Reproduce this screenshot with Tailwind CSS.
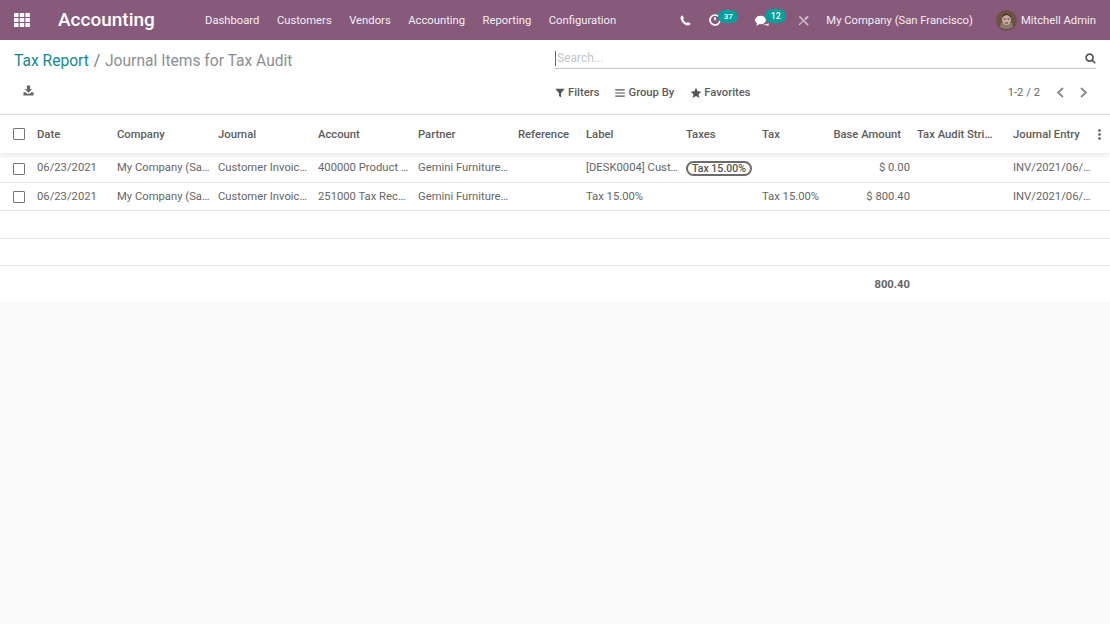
<!DOCTYPE html>
<html lang="en">
<head>
  <meta charset="UTF-8">
  <title>Journal Items for Tax Audit | Accounting</title>
  <script src="https://cdn.jsdelivr.net/npm/@tailwindcss/browser@4"></script>
</head>
<body class="bg-[#f9f9f9] h-[624px] overflow-hidden font-['Roboto',sans-serif] text-[11.25px] text-[#666]">
  <!-- Navigation -->
  <nav class="h-10 bg-[#875a7b] text-white flex items-center">
    <svg class="ml-[14px] w-4 h-4" viewBox="0 0 16 16" fill="#fff">
      <rect x="0" y="1" width="4.5" height="4" rx=".6"/><rect x="5.7" y="1" width="4.5" height="4" rx=".6"/><rect x="11.4" y="1" width="4.5" height="4" rx=".6"/>
      <rect x="0" y="6" width="4.5" height="4" rx=".6"/><rect x="5.7" y="6" width="4.5" height="4" rx=".6"/><rect x="11.4" y="6" width="4.5" height="4" rx=".6"/>
      <rect x="0" y="11" width="4.5" height="4" rx=".6"/><rect x="5.7" y="11" width="4.5" height="4" rx=".6"/><rect x="11.4" y="11" width="4.5" height="4" rx=".6"/>
    </svg>
    <span class="ml-[28px] w-[147px] pt-px text-[19px] font-medium">Accounting</span>
    <div class="flex gap-[17.5px] pt-[2px] text-[#f3eef2]">
      <a>Dashboard</a>
      <a>Customers</a>
      <a>Vendors</a>
      <a>Accounting</a>
      <a>Reporting</a>
      <a>Configuration</a>
    </div>
    <div class="ml-auto flex items-center">
      <svg class="w-[11px] h-[11px]" viewBox="0 0 12 12" fill="#fff"><path d="M2.6.6 4.4 3.2 3.3 4.6C3.8 6 5.5 8 7.300 8.800L8.700 7.500 11.400 9.300C11.100 10.600 10.200 11.500 9.100 11.500 5 11.300.7 6.700.6 2.900.6 1.800 1.400.9 2.600.6Z"/></svg>
      <div class="relative ml-[18px] w-[46px] h-5">
        <svg class="absolute left-0 top-[4px] w-3 h-3" viewBox="0 0 12 12" fill="none" stroke="#fff" stroke-width="1.700"><path d="M9.800 2.700A5 5 0 1 0 11 6.500M6 3.200V6.300"/></svg>
        <span class="absolute left-[9px] top-0 w-5 h-[13px] rounded-full bg-[#00a09d] text-[8px] font-medium leading-[13px] text-center">37</span>
      </div>
      <div class="relative w-[43px] h-5">
        <svg class="absolute left-0 top-[5px] w-[14px] h-3" viewBox="0 0 14 12" fill="#fff"><ellipse cx="5.500" cy="5" rx="5.500" ry="4.300"/><path d="M2 8 1.500 11 5 8.500ZM10.500 9.300C12 9.300 13 8.700 13.500 7.700V11L11.500 10.300 8 10Z"/></svg>
        <span class="absolute left-[10px] -top-[1px] w-[21px] h-[14px] rounded-full bg-[#00a09d] text-[9px] font-medium leading-[14px] text-center">12</span>
      </div>
      <svg class="w-[11px] h-[11px]" viewBox="0 0 12 12" fill="none" stroke="#c9b6c4"><path d="M1 11 7 5.300" stroke-width="1.400"/><path d="M7.500 4.800 11 1.500" stroke-width="2.400"/><path d="M1.500 1.500 11 11" stroke-width="1.800"/></svg>
      <span class="ml-[17px] pt-[2px] text-[#f3eef2]">My Company (San Francisco)</span>
      <svg class="ml-[23px] w-[21px] h-[21px]" viewBox="0 0 21 21">
        <circle cx="10.500" cy="10.500" r="10.500" fill="#6b5245"/>
        <path d="M4 17 Q10 21 17 17 L16 13 H5Z" fill="#8a7a72"/>
        <ellipse cx="10.500" cy="9.500" rx="4.500" ry="5.500" fill="#c8ad9c"/>
        <path d="M6 8Q10.500 2 15 8L14 5 10 3.500 7 5Z" fill="#3f2f28"/>
        <path d="M7.500 9h2.200M11.500 9h2.200M9 13h3" stroke="#4b3a33" stroke-width="1"/>
      </svg>
      <span class="ml-[4px] mr-[14px] pt-[2px] text-[#f3eef2]">Mitchell Admin</span>
    </div>
  </nav>

  <!-- Control panel -->
  <div class="h-[75px] bg-white border-b border-[#dee2e6] flex">
    <div class="w-[555px] pl-[14px]">
      <div class="mt-[10px] text-[15.600px] leading-[22px]">
        <a class="text-[#148a8e]">Tax Report</a>
        <span class="text-[#777] ml-px">/</span>
        <span class="text-[#8b8f93] ml-px">Journal Items for Tax Audit</span>
      </div>
      <svg class="ml-[9px] mt-[13px] w-[11px] h-[11px]" viewBox="0 0 12 12" fill="#666"><path d="M4.200.5H7.800V4.500H10L6 8.500 2 4.500H4.200ZM.5 8H3L4.500 9.500H7.500L9 8H11.500V11.500H.5Z"/></svg>
    </div>
    <div class="flex-1 pr-[14px]">
      <div class="mt-[9px] h-5 border-b border-[#c7c7c7] flex items-center justify-between">
        <span class="border-l border-[#666] pl-px leading-[15px] text-[12px] text-[#c4c7ca]">Search...</span>
        <svg class="w-[11px] h-[11px]" viewBox="0 0 12 12" fill="none" stroke="#555" stroke-width="1.800"><circle cx="5" cy="5" r="3.800"/><path d="M8 8 11.200 11.200"/></svg>
      </div>
      <div class="mt-[16px] flex items-center text-[#5c5c5c] font-medium">
        <svg class="w-[10px] h-[10px] mr-[3px]" viewBox="0 0 10 10" fill="#555"><path d="M.2.8H9.800L6.100 5V9.500L3.900 8V5Z"/></svg>
        <span>Filters</span>
        <svg class="ml-[16px] mr-[3px] w-[10px] h-[10px]" viewBox="0 0 11 10" fill="#555"><path d="M.3 1H10.700V2.200H.3ZM.3 4.400H10.700V5.600H.3ZM.3 7.800H10.700V9H.3Z"/></svg>
        <span>Group By</span>
        <svg class="ml-[16px] mr-[2px] w-3 h-3" viewBox="0 0 12 12" fill="#555"><path d="M6 .8 7.600 4.300 11.400 4.700 8.500 7.200 9.400 11 6 9 2.600 11 3.500 7.200.6 4.700 4.400 4.300Z"/></svg>
        <span>Favorites</span>
        <span class="ml-auto font-normal text-[#666]">1-2 / 2</span>
        <svg class="ml-[16px] -translate-y-px w-[9px] h-[11px]" viewBox="0 0 9 11" fill="none" stroke="#888" stroke-width="1.800"><path d="M7 1 2 5.500 7 10"/></svg>
        <svg class="ml-[14px] mr-[8px] -translate-y-px w-[9px] h-[11px]" viewBox="0 0 9 11" fill="none" stroke="#888" stroke-width="1.800"><path d="M2 1 7 5.500 2 10"/></svg>
      </div>
    </div>
  </div>

  <!-- List -->
  <table class="w-full table-fixed bg-white border-collapse">
    <colgroup>
      <col class="w-[37px]"><col class="w-[80px]"><col class="w-[101px]"><col class="w-[100px]"><col class="w-[100px]"><col class="w-[100px]"><col class="w-[68px]"><col class="w-[100px]"><col class="w-[76px]"><col class="w-[71px]"><col class="w-[84px]"><col class="w-[96px]"><col class="w-[79px]"><col class="w-[18px]">
    </colgroup>
    <thead>
      <tr class="h-[38px] text-left text-[#5c5c5c] shadow-[0_2px_7px_rgba(0,0,0,0.1)] relative [&>th]:pt-[2px]">
        <th class="pl-[13px] pt-0!"><span class="block w-[12px] h-[12px] border border-[#767676] rounded-[1px]"></span></th>
        <th class="font-medium">Date</th>
        <th class="font-medium">Company</th>
        <th class="font-medium">Journal</th>
        <th class="font-medium">Account</th>
        <th class="font-medium">Partner</th>
        <th class="font-medium">Reference</th>
        <th class="font-medium">Label</th>
        <th class="font-medium">Taxes</th>
        <th class="font-medium">Tax</th>
        <th class="font-medium text-right pr-[16px] whitespace-nowrap">Base Amount</th>
        <th class="font-medium truncate pr-[19px]">Tax Audit String</th>
        <th class="font-medium whitespace-nowrap">Journal Entry</th>
        <th class="pt-0!">
          <svg class="w-[3px] h-[11px] ml-[6px]" viewBox="0 0 3 11" fill="#555"><circle cx="1.500" cy="1.500" r="1.300"/><circle cx="1.500" cy="5.500" r="1.300"/><circle cx="1.500" cy="9.500" r="1.300"/></svg>
        </th>
      </tr>
    </thead>
    <tbody>
      <tr class="h-[29px] border-b border-[#e6e6e6] [&>td]:pt-[3px]">
        <td class="pl-[13px]"><span class="block w-[12px] h-[12px] border border-[#767676] rounded-[1px]"></span></td>
        <td>06/23/2021</td>
        <td class="truncate pr-[7px]">My Company (San Francisco)</td>
        <td class="truncate pr-[10px]">Customer Invoices</td>
        <td class="truncate pr-[8px]">400000 Product Sales</td>
        <td class="truncate pr-[9px]">Gemini Furniture, Edwin Hansen</td>
        <td></td>
        <td class="truncate pr-[8px]">[DESK0004] Customizable Desk</td>
        <td><span class="inline-block w-[66px] h-[15px] rounded-full border-2 border-[#6c6c6c] text-[10.500px] text-[#555] font-medium leading-[11px] text-center whitespace-nowrap align-middle">Tax 15.00%</span></td>
        <td></td>
        <td class="text-right pr-[7px]">$ 0.00</td>
        <td></td>
        <td class="truncate" colspan="1">INV/2021/06/0001</td>
        <td></td>
      </tr>
      <tr class="h-[28px] border-b border-[#e6e6e6] [&>td]:pt-[2px]">
        <td class="pl-[13px]"><span class="block w-[12px] h-[12px] border border-[#767676] rounded-[1px]"></span></td>
        <td>06/23/2021</td>
        <td class="truncate pr-[7px]">My Company (San Francisco)</td>
        <td class="truncate pr-[10px]">Customer Invoices</td>
        <td class="truncate pr-[10px]">251000 Tax Received</td>
        <td class="truncate pr-[9px]">Gemini Furniture, Edwin Hansen</td>
        <td></td>
        <td>Tax 15.00%</td>
        <td></td>
        <td>Tax 15.00%</td>
        <td class="text-right pr-[7px]">$ 800.40</td>
        <td></td>
        <td class="truncate">INV/2021/06/0001</td>
        <td></td>
      </tr>
      <tr class="h-[28px] border-b border-[#e6e6e6]"><td colspan="14"></td></tr>
      <tr class="h-[27px] border-b border-[#e6e6e6]"><td colspan="14"></td></tr>
    </tbody>
    <tfoot>
      <tr class="h-[37px] font-bold text-[#666]">
        <td colspan="10"></td>
        <td class="text-right pr-[7px] pt-[4px]">800.40</td>
        <td colspan="3"></td>
      </tr>
    </tfoot>
  </table>
</body>
</html>
